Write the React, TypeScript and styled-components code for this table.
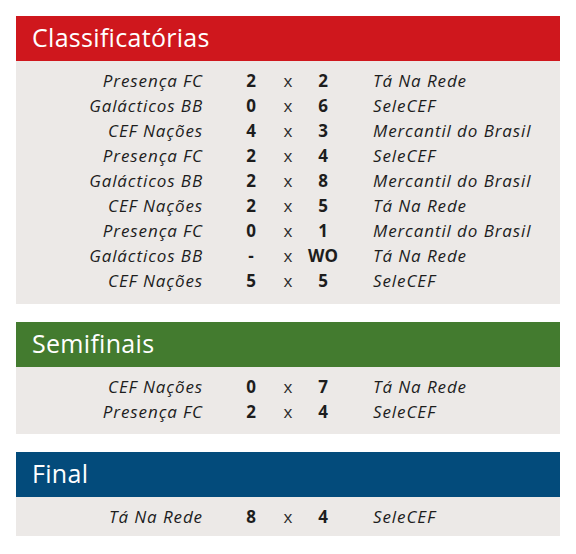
import React from "react";
import styled, { createGlobalStyle } from "styled-components";

const GlobalStyle = createGlobalStyle`
  html, body { margin: 0; padding: 0; background: #ffffff; }
  body { font-family: "Open Sans", "Noto Sans", sans-serif; color: #1d1d1d; }
`;

const Page = styled.div`
  width: 576px;
  padding: 16px;
  box-sizing: border-box;
  display: flex;
  flex-direction: column;
  gap: 18px;
`;

const Panel = styled.section`
  display: flex;
  flex-direction: column;
`;

const Header = styled.h2<{ $bg: string }>`
  margin: 0;
  height: 45px;
  box-sizing: border-box;
  padding: 5px 0 0 16px;
  background: ${(p) => p.$bg};
  color: #ffffff;
  font-size: 25px;
  font-weight: 400;
  line-height: 32px;
  letter-spacing: 0.3px;
`;

const Body = styled.div<{ $pb: number }>`
  background: #ece9e7;
  padding: 7px 0 ${(p) => p.$pb}px;
`;

const Row = styled.div`
  display: grid;
  grid-template-columns: 213px 44px 30px 40px 1fr;
  height: 25px;
  align-items: center;
  font-size: 17px;
  line-height: 25px;
`;

const Team = styled.span<{ $side: "left" | "right" }>`
  font-style: italic;
  letter-spacing: 0.9px;
  white-space: nowrap;
  text-align: ${(p) => (p.$side === "left" ? "right" : "left")};
  padding-right: ${(p) => (p.$side === "left" ? "26px" : "0")};
  padding-left: ${(p) => (p.$side === "right" ? "30px" : "0")};
`;

const Score = styled.span`
  font-weight: 700;
  text-align: center;
`;

const Versus = styled.span`
  text-align: center;
  color: #2a2a2a;
`;

type Match = [string, string, string, string];

const sections: { title: string; color: string; pb: number; matches: Match[] }[] = [
  {
    title: "Classificatórias",
    color: "#cf171d",
    pb: 11,
    matches: [
      ["Presença FC", "2", "2", "Tá Na Rede"],
      ["Galácticos BB", "0", "6", "SeleCEF"],
      ["CEF Nações", "4", "3", "Mercantil do Brasil"],
      ["Presença FC", "2", "4", "SeleCEF"],
      ["Galácticos BB", "2", "8", "Mercantil do Brasil"],
      ["CEF Nações", "2", "5", "Tá Na Rede"],
      ["Presença FC", "0", "1", "Mercantil do Brasil"],
      ["Galácticos BB", "-", "WO", "Tá Na Rede"],
      ["CEF Nações", "5", "5", "SeleCEF"],
    ],
  },
  {
    title: "Semifinais",
    color: "#437b2f",
    pb: 10,
    matches: [
      ["CEF Nações", "0", "7", "Tá Na Rede"],
      ["Presença FC", "2", "4", "SeleCEF"],
    ],
  },
  {
    title: "Final",
    color: "#034b7b",
    pb: 7,
    matches: [["Tá Na Rede", "8", "4", "SeleCEF"]],
  },
];

export default function App() {
  return (
    <>
      <GlobalStyle />
      <Page>
        {sections.map((s) => (
          <Panel key={s.title}>
            <Header $bg={s.color}>{s.title}</Header>
            <Body $pb={s.pb}>
              {s.matches.map((m, i) => (
                <Row key={i}>
                  <Team $side="left">{m[0]}</Team>
                  <Score>{m[1]}</Score>
                  <Versus>x</Versus>
                  <Score>{m[2]}</Score>
                  <Team $side="right">{m[3]}</Team>
                </Row>
              ))}
            </Body>
          </Panel>
        ))}
      </Page>
    </>
  );
}
